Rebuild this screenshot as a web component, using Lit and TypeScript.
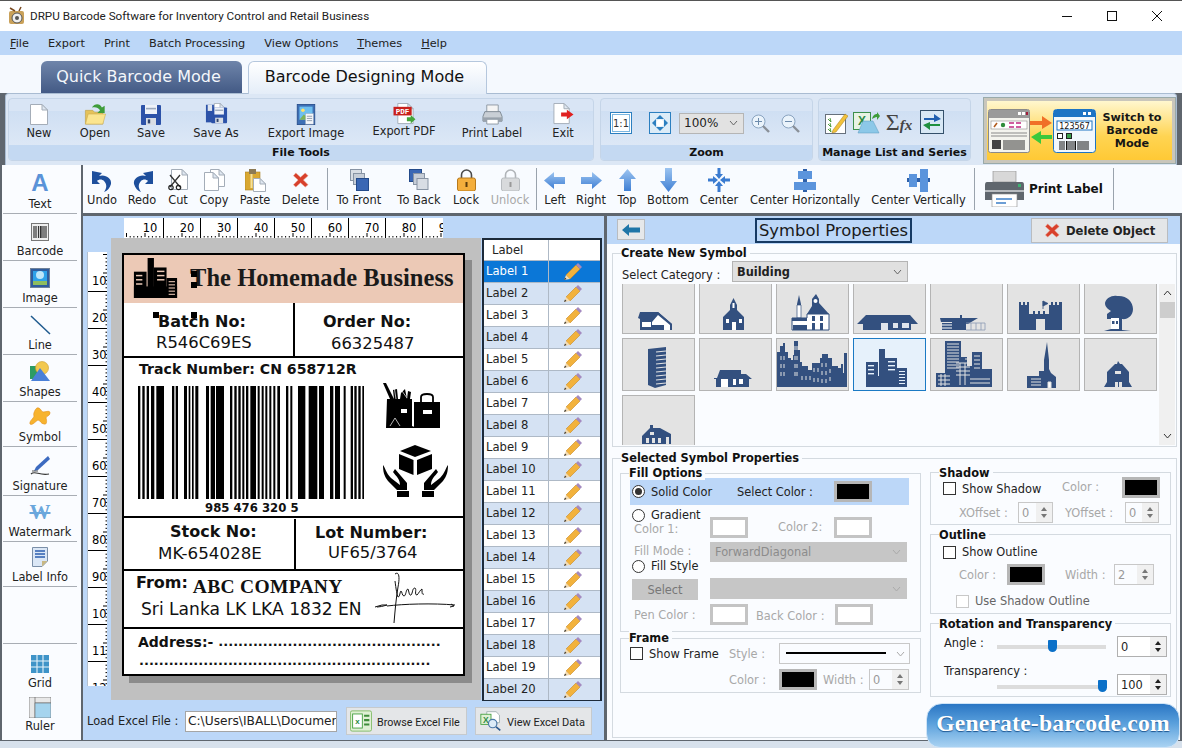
import { LitElement, html, css, svg } from "lit";
import { customElement } from "lit/decorators.js";

const I = (w: number, h: number, c: unknown) =>
  html`<svg class="i" width=${w} height=${h} viewBox="0 0 ${w} ${h}">${c}</svg>`;
const V = (w: number, h: number, vw: number, vh: number, c: unknown) =>
  html`<svg class="i" width=${w} height=${h} viewBox="0 0 ${vw} ${vh}">${c}</svg>`;

const redX = svg`<path d="M3 1 L8 5.5 L13 1 L16 4 L11 8.5 L16 13.5 L13 16 L8 11.5 L3 16 L0.5 13.5 L5.5 8.5 L0.5 4Z" fill="#d8402c" stroke="#eaa08c" stroke-width=".6"/>`;
const doc = (x = 0, y = 0, w = 17, h = 21) => svg`<path d="M${x + .5} ${y + .5}H${x + w - 6}L${x + w - .5} ${y + 6}V${y + h - .5}H${x + .5}Z" fill="#fff" stroke="#a4adb8"/><path d="M${x + w - 6} ${y + .5}V${y + 6}H${x + w - .5}Z" fill="#dfe7f1" stroke="#a4adb8"/>`;
const floppy = (x: number, y: number, s = 20) => svg`<rect x=${x} y=${y} width=${s} height=${s} rx="1" fill="#2c52a8"/><rect x=${x + s * .2} y=${y} width=${s * .6} height=${s * .45} fill="#eef2f8"/><rect x=${x + s * .25} y=${y + s * .14} width=${s * .5} height=${s * .08} fill="#9aa8bc"/><rect x=${x + s * .25} y=${y + s * .65} width=${s * .5} height=${s * .35} fill="#d8dde4"/><rect x=${x + s * .34} y=${y + s * .72} width=${s * .12} height=${s * .2} fill="#30456e"/>`;

const icons: Record<string, unknown> = {
  new: I(20, 21, doc(1, 0, 18, 21)),
  open: V(23, 22, 24, 24, svg`<path d="M1 8H9L11 10H20V23H1Z" fill="#e5c25a" stroke="#b89a3e" stroke-width=".6"/><path d="M1 23L4 12H23L20 23Z" fill="#fbe58f" stroke="#c9a94c" stroke-width=".6"/><path d="M8 5C11 0 17 0 19 5L22 3V11H14L17 8C15 5 12 4 8 5Z" fill="#3f9d3a"/>`),
  save: I(20, 20, floppy(0, 0, 20)),
  saveas: V(23, 22, 24, 25, svg`${doc(9, 0, 13, 12)}${floppy(6, 5, 18)}<rect x="0" y="2" width="9" height="20" fill="#2c52a8"/><rect x="2" y="2" width="5" height="7" fill="#dfe5ee"/>`),
  img: V(20, 21, 21, 24, svg`<rect x=".5" y=".5" width="20" height="23" fill="#3d6fb5" stroke="#294f8c"/><rect x="3" y="3" width="15" height="15" fill="#6ebff0"/><circle cx="7" cy="7" r="2" fill="#ffe26a"/><path d="M3 18L8 12L12 15L18 11V18Z" fill="#7fb358"/><rect x="10" y="11" width="9" height="12" fill="#f4f6fa" stroke="#9aa8ba" stroke-width=".5"/><path d="M11.5 14H17.5M11.5 16.5H17.5M11.5 19H17.5" stroke="#6c7d94" stroke-width=".8"/>`),
  pdf: V(23, 22, 23, 23, svg`${doc(4, 0, 17, 22)}<rect x="0" y="4" width="19" height="9" fill="#c8201c"/><text x="9.5" y="11.6" font-family="Liberation Mono" font-size="8" font-weight="700" fill="#fff" text-anchor="middle">PDF</text><path d="M14 15H18V12.5L23 17L18 21.5V19H14Z" fill="#44a53c"/>`),
  print: V(21, 21, 22, 22, svg`<path d="M5 1H17V9H5Z" fill="#f4f4f4" stroke="#8f99a4"/><path d="M3 8H19L21 13V18H1V13Z" fill="#c9cfd5" stroke="#7e8993"/><rect x="1" y="14" width="20" height="4" fill="#9aa3ad"/><path d="M5 16H17V21H5Z" fill="#fff" stroke="#8f99a4"/>`),
  exit: V(23, 22, 23, 23, svg`${doc(1, 0, 17, 22)}<path d="M9 10H15V7L22 12L15 17V14H9Z" fill="#e02020"/>`),
  undo: V(21, 23, 21, 23, svg`<path d="M0 2L10 4L7 7C13 5 20 9 19 15C18 19 15 22 12 23C15 19 15 15 12 12C10 10 7 10 5 12L8 15L0 15Z" fill="#1e4f9c"/>`),
  redo: V(21, 23, 21, 23, svg`<path d="M21 2L11 4L14 7C8 5 1 9 2 15C3 19 6 22 9 23C6 19 6 15 9 12C11 10 14 10 16 12L13 15L21 15Z" fill="#1e4f9c"/>`),
  cut: I(20, 22, svg`${doc(3, 0, 17, 21)}<path d="M2 6L12 18M12 6L2 18" stroke="#333" stroke-width="1.3"/><circle cx="3" cy="18.5" r="2.2" fill="none" stroke="#222" stroke-width="1.2"/><circle cx="10.5" cy="18.5" r="2.2" fill="none" stroke="#222" stroke-width="1.2"/>`),
  copy: I(21, 22, svg`${doc(6, 0, 15, 18)}${doc(0, 3, 15, 19)}`),
  paste: I(21, 23, svg`<rect x="0" y="3" width="15" height="18" fill="#d9a832" stroke="#a97f22" stroke-width=".6"/><rect x="4" y="0" width="7" height="5" fill="#8c7a54"/><rect x="5.5" y="5" width="2" height="14" fill="#f6e19a"/>${doc(8, 9, 13, 14)}`),
  del: V(16, 16, 17, 17, redX),
  front: I(19, 23, svg`<rect x=".5" y=".5" width="11" height="11" fill="#d8dde4" stroke="#8894a4"/><rect x="3.5" y="4.5" width="11" height="11" fill="#c6cdd7" stroke="#8894a4"/><rect x="6.5" y="9.5" width="12" height="12" fill="#3a67b4" stroke="#234a8a"/>`),
  back: I(20, 23, svg`<rect x=".5" y=".5" width="12" height="12" fill="#3a67b4" stroke="#234a8a"/><rect x="4.5" y="4.5" width="11" height="11" fill="#c6cdd7" stroke="#8894a4"/><rect x="8" y="9.5" width="11" height="11" fill="#d8dde4" stroke="#8894a4"/>`),
  lock: I(19, 22, svg`<path d="M4.5 10V6A5 5 0 0 1 14.5 6V10" fill="none" stroke="#4a4a4a" stroke-width="1.6"/><rect x=".5" y="9" width="18" height="13" rx="2" fill="#f4ae3c" stroke="#b87a1c"/><rect x="8.5" y="13" width="2" height="5" fill="#5b3b0b"/>`),
  unlock: I(19, 22, svg`<path d="M4.5 10V6A5 5 0 0 1 14.5 6V10" fill="none" stroke="#b0b4b8" stroke-width="1.6"/><rect x=".5" y="9" width="18" height="13" rx="2" fill="#d8dadc" stroke="#b8bcc0"/><rect x="8.5" y="13" width="2" height="5" fill="#999"/>`),
  left: I(22, 17, svg`<path d="M0 8.5L10 0V5H21V12H10V17Z" fill="url(#gb)"/>`),
  right: I(22, 17, svg`<path d="M22 8.5L12 0V5H1V12H12V17Z" fill="url(#gb)"/>`),
  top: I(17, 22, svg`<path d="M8.5 0L17 10H12V22H5V10H0Z" fill="url(#gb)"/>`),
  bottom: I(17, 24, svg`<path d="M8.5 24L17 13H12V0H5V13H0Z" fill="url(#gb)"/>`),
  center: I(22, 24, svg`<g fill="#3a7bd0"><path d="M11 11L7 6H9.5V0H12.5V6H15Z"/><path d="M11 13L7 18H9.5V24H12.5V18H15Z"/><path d="M10 12L5 8V10.5H0V13.5H5V16Z"/><path d="M12 12L17 8V10.5H22V13.5H17V16Z"/></g>`),
  ch: I(22, 23, svg`<rect x="9" y="0" width="4" height="23" fill="#2d5fa8"/><rect x="4" y="2" width="14" height="8" fill="#5b94dc"/><rect x="0" y="13" width="22" height="8" fill="#5b94dc"/>`),
  cv: I(23, 23, svg`<rect x="0" y="9" width="23" height="4" fill="#2d5fa8"/><rect x="2" y="5" width="8" height="13" fill="#5b94dc"/><rect x="13" y="0" width="8" height="23" fill="#5b94dc"/>`),
};

const side: Record<string, unknown> = {
  text: html`<span class="sa">A</span>`,
  barcode: I(18, 18, svg`<rect x=".5" y=".5" width="17" height="17" fill="#f0f0f0" stroke="#777"/><path d="M3 3V15M5 3V15M7.5 3V15M9.5 3V15M11 3V15M13 3V15M15 3V15" stroke="#333" stroke-width="1.2"/>`),
  image: I(20, 20, svg`<rect x=".5" y=".5" width="19" height="19" fill="#2f5c9e" stroke="#6f8199"/><rect x="3" y="3" width="14" height="14" fill="#2ea1ea"/><circle cx="10" cy="7" r="4" fill="#bfe6fa"/><rect x="3" y="13" width="14" height="4" fill="#8fbe5e"/>`),
  line: I(21, 20, svg`<path d="M1 1L20 19" stroke="#1f5a8e" stroke-width="1.5"/>`),
  shapes: I(20, 21, svg`<rect x="0" y="5" width="10" height="13" fill="#2d9c63"/><circle cx="12" cy="7" r="6.5" fill="#f2c84f" stroke="#c99a2c" stroke-width=".6"/><path d="M10 7L20 20H1Z" fill="#4a80d8"/>`),
  symbol: I(22, 20, svg`<path d="M8 1C11 0 12 4 14 5C17 5 21 3 21 6C21 9 17 9 17 11C18 14 18 18 15 17C12 17 11 13 9 13C7 14 3 19 1 17C0 14 5 11 5 9C4 7 6 2 8 1Z" fill="#f7b32e" stroke="#e08f1e" stroke-width=".6"/>`),
  signature: I(20, 20, svg`<path d="M18 0L20 3L8 14L4 15L6 11Z" fill="#3d6bc0"/><path d="M1 18C5 14 9 20 19 18" stroke="#333" stroke-width="1.2" fill="none"/><path d="M2 15L8 15" stroke="#555"/>`),
  watermark: html`<span class="wm">W</span>`,
  info: I(16, 20, svg`<path d="M.5 .5H15.5V14L10 19.5H.5Z" fill="#dbe7f6" stroke="#7b8fa8"/><path d="M3 4H13M3 7H13M3 10H13" stroke="#2d5fb0" stroke-width="1.3"/><path d="M10 19.5V14H15.5Z" fill="#c8b884"/>`),
  grid: I(18, 18, svg`<rect width="18" height="18" fill="#3f94c8"/><path d="M6 0V18M12 0V18M0 6H18M0 12H18" stroke="#e6f3fa" stroke-width="1.1"/>`),
  ruler: I(22, 21, svg`<rect x="0" y="0" width="22" height="6" fill="#e8e8e8" stroke="#666" stroke-width=".7"/><rect x="0" y="0" width="6" height="21" fill="#e8e8e8" stroke="#666" stroke-width=".7"/><rect x="6" y="6" width="16" height="15" fill="#a5d4ee" stroke="#666" stroke-width=".6"/>`),
};

const pencil = I(18, 17, svg`<path d="M2 12L12 2L16 6L6 16Z" fill="#f2b23c" stroke="#c98820" stroke-width=".6"/><path d="M12 2L14 0L18 4L16 6Z" fill="#a48ac0"/><path d="M2 12L0 17L6 16Z" fill="#f5dcb0"/><path d="M0 17L1 14.5L2.5 16Z" fill="#333"/>`);

const city = (f: string, w: string) => svg`<g fill=${f}><rect x="0" y="13" width="12" height="25"/><rect x="13" y="0" width="6" height="38"/><rect x="19" y="9" width="12" height="29"/><rect x="31" y="19" width="10" height="19"/><rect x="0" y="27" width="41" height="11"/></g><g fill=${w}><rect x="2" y="16" width="6" height="1.4"/><rect x="2" y="20" width="6" height="1.4"/><rect x="2" y="24" width="6" height="1.4"/><rect x="22" y="12" width="7" height="1.4"/><rect x="22" y="16" width="7" height="1.4"/><rect x="22" y="20" width="7" height="1.4"/><rect x="33" y="22" width="6" height="1"/><rect x="33" y="25" width="6" height="1"/><rect x="33" y="28" width="6" height="1"/><rect x="33" y="31" width="6" height="1"/><rect x="33" y="34" width="6" height="1"/></g>`;

const C = "#33507f";
const tiles = [
  svg`<path d="M18 31H36L50 43V49H18V38L16 37Z" fill=${C}/><path d="M36 31L50 43H41V39L36 33L30 39V40H20Z" fill=${C}/><path d="M36 34L48 44V49H42V44H30V41Z" fill="#fff"/><rect x="20" y="41" width="9" height="5" fill="#fff"/><path d="M33 45H35V49H33ZM38 45H41V49H38Z" fill=${C}/>`,
  svg`<path d="M34.5 17L38 24V29L45 36V49H24V36L31 29V24Z" fill=${C}/><rect x="33.5" y="22" width="2" height="5" fill="#fff"/><rect x="33" y="41" width="4" height="8" fill="#fff"/><path d="M27 38H30V42H27ZM40 38H43V42H40Z" fill="#fff"/>`,
  svg`<path d="M21 23L23 14L25 23V37H21Z" fill=${C}/><path d="M36 25V18L40 13L43 18V22L53 33H31Z" fill=${C}/><path d="M21 24H25V37H21Z" fill="#fff" stroke=${C} stroke-width=".7"/><path d="M16 37H31V33H53V49H16Z" fill="#fff" stroke=${C}/><path d="M16 37H31V40H16ZM17 44H31V49H17Z" fill=${C}/><path d="M36 35H39V40H36ZM44 35H47V40H44ZM36 42H39V49H36ZM44 42H47V49H44Z" fill=${C}/><circle cx="39.5" cy="20" r="2" fill="#fff"/>`,
  svg`<path d="M10 37L4 43H10V49H58V43H65L57 34H13Z" fill=${C}/><path d="M28 42H35V49H28ZM40 42H45V47H40ZM49 42H56V47H49Z" fill="#fff" fill-opacity=".85"/>`,
  svg`<path d="M10 37H30V34H32V37H48L38 43H36V49H22V41H11Z" fill=${C}/><path d="M12 42H22V49H12Z" fill=${C}/><path d="M12 44H22M12 47H22" stroke="#fff" stroke-width="1"/><path d="M36 42H55V49H36M41 42V49M46 42V49M51 42V49" fill="none" stroke="#8a9ab4" stroke-width=".8"/>`,
  svg`<path d="M12 21H14V24H16V21H18V24H20V21H22V33H26V30H28V33H31V30H33V33H36V30H38V33H42V24H44V21H46V24H48V21H50V24H52V21H55V49H38V38H29V49H12Z" fill=${C}/><path d="M36 20V28M36 20L41 22.5L36 25Z" fill=${C} stroke=${C} stroke-width=".8"/>`,
  svg`<path d="M33 15C42 14 49 20 49 28C49 35 43 39 38 38V49L47 50H20L27 48V38H23V33L27 30C24 28 21 26 21 22C22 17 28 14 33 15Z" fill=${C}/><path d="M27 37H35V48H27Z" fill="#fff"/><rect x="28" y="40" width="2.5" height="3" fill=${C}/><rect x="32" y="40" width="2" height="3" fill=${C}/>`,
  svg`<path d="M26 11L44 9V47L33 50L26 47Z" fill=${C}/><path d="M34 14L44 13M34 18L44 17M34 22L44 21M34 26L44 25M34 30L44 29M34 34L44 33M34 38L44 37M34 42L44 41M34 46L44 45" stroke="#e3e3e3" stroke-width="1.2"/>`,
  svg`<path d="M15 40H18L21 32H42V36H47L53 41H50V49H17V41H15Z" fill=${C}/><path d="M22 41H29V49H22ZM34 41H37V47H34ZM40 41H44V46H40Z" fill="#fff"/>`,
  svg`<path d="M1 49V14H4V8H7V5H9V14H12V20H15V22H17V17H18V3H22V12H24V24H26V28H32V32H36V25H44V20H46V16H52V20H56V28H62V30H65V26H67V35H68V15H71V49Z" fill=${C}/><path d="M5 18V22M8 18V22M5 26V30M8 26V30M5 34V38M8 34V38M19 8V12M21 8V12M19 18V22M21 18V22M19 26V30M21 26V30M19 34V38M21 34V38M38 30V34M42 30V34M46 25V29M50 25V29M54 31V35M46 33V37M50 33V37M54 39V43M46 41V45M50 41V45M38 40V44M42 40V44M30 38V42M34 38V42M26 38V42" stroke="#e3e3e3" stroke-width="1"/>`,
  V(41, 38, 41, 38, city(C, "#e6f1fb")),
  svg`<path d="M15 3H31V19H37V28H42V14H52V31H62V49H6V35H15Z" fill=${C}/><path d="M17 6H29M17 9H29M17 12H29M17 15H29M17 18H29M17 21H29M17 24H29M17 27H29M17 30H29M39 21H35M26 25H40M26 29H40M26 33H40M26 37H40M44 18H50M44 22H50M44 26H50M44 30H50M8 38H20M8 42H20M8 46H20M40 41H60M40 45H60M11 36V48M15 36V48M30 25V47M35 25V47" stroke="#e3e3e3" stroke-width="1"/>`,
  svg`<path d="M40 4L42 22V31L44 35L49 39V50H20V38H32V33H37V22Z" fill=${C}/><path d="M41 44H44V50H41ZM24 41H34M24 44H34M24 47H34" stroke="#e3e3e3" fill="#fff"/>`,
  svg`<path d="M34 23L36 26H38L45 34V44L48 49H20L23 44V34L31 26H33Z" fill=${C}/><path d="M31 33H37V36H31ZM31 44H34V49H31ZM35 44H38V49H35Z" fill="#e3e3e3"/>`,
  svg`<path d="M20 41L28 33V30H31V33H38L49 39V49H20Z" fill=${C}/><path d="M24 43H27V48H24ZM30 43H33V48H30ZM36 43H39V48H36ZM44 42H47V49H44ZM28 37H32V40H28Z" fill="#e3e3e3"/>`,
];

const bars: [number, number][] = [[84,7],[97,7],[110,7],[123,10],[139,23],[186,7],[197,7],[222,9],[236,5],[246,5],[256,9],[288,9],[302,13],[318,24],[360,7],[373,7],[385,7],[397,6],[408,7],[421,17],[443,6],[455,6],[466,6],[478,6],[490,6],[502,8],[528,7],[541,6],[564,22],[596,26],[627,15],[660,10],[675,15],[701,6],[722,7],[733,7],[745,7],[757,5]];

const rulerH = () => {
  const t = [];
  for (let i = 0; i < 86; i++) {
    const x = 2 + i * 3.7;
    t.push(svg`<rect x=${x} y=${i % 5 === 0 ? 15 : 18} width="1" height=${i % 5 === 0 ? 4 : 1.5} fill="#000"/>`);
  }
  for (let i = 1; i <= 9; i++) {
    const x = 39 + (i - 1) * 37;
    t.push(svg`<rect x=${x} y="0" width="1" height="20" fill="#000"/><text x=${x - 13} y="14" font-size="11.5" text-anchor="middle" font-family="DejaVu Sans">${i * 10}</text>`);
  }
  return I(319, 20, t);
};
const rulerV = () => {
  const t = [];
  for (let i = 0; i < 118; i++) {
    const y = 2 + i * 3.7;
    t.push(svg`<rect x=${i % 5 === 0 ? 15 : 17.5} y=${y} width=${i % 5 === 0 ? 5 : 2} height="1" fill="#000"/>`);
  }
  for (let i = 1; i <= 12; i++) {
    const y = 39 + (i - 1) * 37;
    t.push(svg`<rect x="0" y=${y} width="20" height="1" fill="#000"/><text x="4" y=${y - 6} font-size="11.5" font-family="DejaVu Sans">${i * 10}</text>`);
  }
  return I(20, 434, t);
};

@customElement("app-root")
export class AppRoot extends LitElement {
  static styles = css`
    :host { display: block; width: 1182px; height: 748px; font-family: "DejaVu Sans", sans-serif; font-size: 11.4px; color: #222; overflow: hidden; }
    * { box-sizing: border-box; }
    .i { display: block; flex: none; }
    .app { position: relative; width: 1182px; height: 748px; background: #5f666e; display: flex; flex-direction: column; overflow: hidden; }
    .title { height: 31px; background: #fff; border-top: 1px solid #555; display: flex; align-items: center; font: 11.7px Roboto, sans-serif; color: #222; padding-left: 7px; gap: 3px; }
    .wc { margin-left: auto; margin-right: 3px; display: flex; gap: 0; }
    .wc span { width: 45px; height: 30px; display: flex; align-items: center; justify-content: center; }
    .menu { height: 24px; background: #bcd7f8; display: flex; align-items: center; padding-left: 10px; gap: 19px; font-size: 11.3px; }
    .menu u { text-decoration: underline; }
    .tabs { height: 38px; background: #f5f9fe; display: flex; align-items: flex-end; padding-left: 41px; gap: 6px; }
    .tab { height: 32px; display: flex; align-items: center; justify-content: center; font-size: 16px; border-radius: 6px 6px 0 0; padding: 0 6px 2px 0; }
    .tab.q { width: 201px; color: #f4f7fb; background: linear-gradient(#6f85aa, #435a85); }
    .tab.d { width: 239px; height: 33px; margin-bottom: -1px; color: #111; background: linear-gradient(#fff, #e4edf8); border: 1px solid #b5c7dd; border-bottom: none; position: relative; z-index: 1; padding-bottom: 3px; }
    .ribbon { height: 72px; margin-left: 5px; width: 1172px; background: #dce7f5; border: 1px solid #a9bcd2; border-bottom: none; border-radius: 4px 4px 0 0; display: flex; padding: 4px 0 0 2px; }
    .grp { height: 63px; display: flex; flex-direction: column; border: 1px solid #c5d5e8; border-radius: 4px; background: linear-gradient(#d9e5f5 0, #d9e5f5 12px, #cfdff3 12px, #dde8f6 48px); overflow: hidden; }
    .grp.f { width: 586px; } .grp.z { width: 213px; margin-left: 6px; } .grp.m { width: 153px; margin-left: 5px; }
    .gb { height: 47px; display: flex; }
    .gf { height: 15px; background: #c4d9f2; text-align: center; font-weight: 700; font-size: 11px; line-height: 15px; color: #111; white-space: nowrap; }
    .rb { display: flex; flex-direction: column; align-items: center; padding-top: 2px; flex: none; white-space: nowrap; }
    .ib { height: 24px; display: flex; align-items: flex-end; }
    .rb span { line-height: 14px; margin-top: 1px; }
    .rb.up span { margin-top: -1px; }
    .f0 { margin-left: 2px; }
    .w56 { width: 56px; } .w74 { width: 74px; } .w106 { width: 106px; } .w90 { width: 90px; } .w86 { width: 86px; }
    .zb { align-items: center; padding: 2px 0 0 9px; }
    .combo100 { width: 65px; height: 21px; margin: 0 7px 0 8px; background: #e2e2e2; border: 1px solid #b5b5b5; display: flex; align-items: center; justify-content: space-between; padding: 0 5px 0 4px; font-size: 12px; }
    .g17 { margin-left: 17px; } .g11 { margin-left: 11px; }
    .mb { align-items: center; padding-left: 6px; gap: 5px; }
    .mb .l7 { margin-left: 2px; }
    .sig { font: 400 24px "Liberation Serif", serif; color: #444; width: 28px; white-space: nowrap; line-height: 22px; text-align: center; }
    .sig i { font: italic 700 15px "Liberation Serif", serif; }
    .sw2 { width: 193px; height: 67px; margin-left: 12px; margin-top: -1px; background: #c9c6bb; border: 1px solid #9aa; padding: 3px; }
    .sw2i { height: 100%; display: flex; align-items: center; padding-left: 1px; background: linear-gradient(#fff7cf, #ffd452 60%, #ffc935); }
    .swt { flex: 1; text-align: center; font-weight: 700; font-size: 11.2px; line-height: 13px; color: #161616; padding: 0 4px 0 0; }
    .main { flex: 1; display: flex; padding: 0 0 0 2px; gap: 2px; height: 575px; }
    .side { width: 79px; height: 575px; background: #fafcff; display: flex; flex-direction: column; flex: none; padding: 0 4px 0 1px; }
    .si { display: flex; flex-direction: column; align-items: center; justify-content: flex-end; border-bottom: 1px solid #a8adb4; padding-bottom: 2px; flex: none; white-space: nowrap; }
    .si span.t { line-height: 14px; margin-top: 3px; }
    .h49 { height: 49px; } .h47 { height: 47px; } .h46 { height: 46px; } .h45 { height: 45px; } .h49b { height: 49px; }
    .spacer { height: 57px; border-bottom: 1px solid #a8adb4; flex: none; }
    .sb { display: flex; flex-direction: column; align-items: center; flex: none; white-space: nowrap; margin-top: 11px; }
    .sb span.t { line-height: 14px; margin-top: 3px; }
    .sb.r { margin-top: 7px; }
    .sb.r span.t { margin-top: 1px; }
    .sa { font: 700 24px "Liberation Sans", sans-serif; color: #5a93d8; line-height: 22px; }
    .wm { font: 700 21px "Liberation Serif", serif; line-height: 19px; color: #6aa7dc; text-decoration: line-through; }
    .content { flex: 1; display: flex; flex-direction: column; gap: 3px; min-width: 0; }
    .tb { height: 48px; flex: none; background: #f8fbff; display: flex; }
    .ti { display: flex; flex-direction: column; align-items: center; justify-content: flex-end; padding-bottom: 6px; flex: none; white-space: nowrap; }
    .ti span { line-height: 14px; margin-top: 1px; }
    .ti .ib { height: 24px; align-items: center; }
    .ti.off { color: #a8a8a8; }
    .tsp { width: 1px; height: 42px; margin-top: 3px; background: #9aa3ad; flex: none; }
    .t0 { width: 1px; } .t36 { width: 36px; } .t44 { width: 44px; } .t28 { width: 28px; } .t38 { width: 38px; } .t53 { width: 53px; } .t62 { width: 62px; } .t58 { width: 58px; } .t52 { width: 52px; } .t46 { width: 46px; } .t56 { width: 56px; } .t116 { width: 116px; } .t111 { width: 111px; }
    .tp { width: 138px; display: flex; align-items: center; padding-left: 10px; gap: 5px; font-weight: 700; font-size: 12px; color: #111; flex: none; }
    .work { flex: 1; display: flex; gap: 3px; min-height: 0; }
    .canvas { width: 521px; background: #bcd7f8; display: flex; flex-direction: column; flex: none; }
    .rt { height: 22px; padding: 2px 0 0 41px; flex: none; }
    .rh { background: #fff; width: 319px; height: 20px; }
    .mid { height: 463px; display: flex; flex: none; }
    .rv { width: 20px; height: 434px; margin: 14px 4px 0 4px; background: #fff; flex: none; overflow: hidden; border-left: 1px solid #b4c0cf; }
    .gray { width: 370px; height: 462px; background: #c0c0c0; padding: 15px 0 0 11px; flex: none; }
    .card { width: 343px; height: 423px; border: 2px solid #000; background: #fff; box-shadow: 7px 7px 0 #8b8b8b; color: #111; position: relative; }
    .c1 { height: 48px; background: #ecc9b6; display: flex; align-items: center; padding: 0 0 2px 9px; }
    .hname { font: 700 24.5px "Liberation Serif", serif; margin-left: 12px; white-space: nowrap; letter-spacing: .04px; color: #1a1a1a; }
    .hd { position: absolute; width: 6px; height: 6px; background: #000; }
    .hd.a { left: 67px; top: 16px; } .hd.b { left: 67px; top: 27px; } .hd.c { left: 29px; top: 57px; } .hd.d { left: 67px; top: 57px; }
    .c2 { height: 55px; display: grid; grid-template-columns: 169px 1fr; border-bottom: 2px solid #000; }
    .c4 { height: 53px; display: grid; grid-template-columns: 170px 1fr; border-bottom: 2px solid #000; }
    .cell { padding-top: 9px; white-space: nowrap; }
    .c4 .cell { padding-top: 4px; }
    .cell.r { border-left: 2.5px solid #000; }
    .cell.l { margin-top: 1px; }
    .bh { font-weight: 700; font-size: 16px; line-height: 20px; }
    .rg { font-size: 16.4px; line-height: 20px; }
    .c2 .rg { margin-top: 1px; }
    .c2 .r .rg { margin-top: 2px; }
    .c4 .rg { margin-top: 1px; font-size: 16.7px; }
    .c4 .r .rg { margin-top: 0; font-size: 16.4px; }
    .p34 { padding-left: 34px; } .p32 { padding-left: 32px; } .p30 { padding-left: 28px; } .p38 { padding-left: 36px; }
    .p46 { padding-left: 46px; } .p34b { padding-left: 34px; }
    .p20 { padding-left: 19px; } .p33 { padding-left: 32px; }
    .c3 { height: 160px; display: flex; border-bottom: 2px solid #000; }
    .c3a { width: 259px; flex: none; padding: 3px 0 0 14px; white-space: nowrap; }
    .trk { font-weight: 700; font-size: 14.1px; line-height: 16px; padding-left: 1px; }
    .bc { margin-top: 9px; }
    .bn { font-weight: 700; font-size: 11.7px; line-height: 14px; margin: 2px 0 0 67px; }
    .c3b { padding: 25px 0 0 0; display: flex; flex-direction: column; gap: 17px; }
    .c5 { height: 58px; display: flex; border-bottom: 2px solid #000; }
    .c5a { width: 249px; flex: none; padding: 2px 0 0 12px; white-space: nowrap; }
    .from { display: flex; align-items: flex-end; gap: 5px; height: 22px; }
    .from b { font-size: 16px; line-height: 20px; margin-bottom: 2px; }
    .from i { font: 700 19.5px "Liberation Serif", serif; line-height: 20px; letter-spacing: .3px; margin-bottom: -2px; }
    .sri { font-size: 17.1px; line-height: 20px; margin: 4px 0 0 5px; }
    .c6 { height: 45px; padding: 4px 0 0 14px; white-space: nowrap; overflow: hidden; }
    .ad { display: flex; height: 18px; align-items: center; font-weight: 700; font-size: 14px; }
    .dots { display: block; font-weight: 700; font-size: 13px; letter-spacing: 0; line-height: 18px; }
    .d1 { margin-left: 5px; } .d2 { margin-left: 1px; margin-top: 1px; }
    .list { width: 120px; height: 463px; margin-left: 1px; border: 2px solid #1c2a3a; background: #fff; flex: none; display: flex; flex-direction: column; }
    .lr { display: grid; grid-template-columns: 65px 1fr; height: 22px; flex: none; border-top: 1px solid #aeb9c6; }
    .lr > div { display: flex; align-items: center; padding-bottom: 1px; }
    .lr > div:first-child { padding-left: 2px; border-right: 1px solid #aeb9c6; font-size: 11.6px; }
    .lr > div:last-child { justify-content: center; padding-right: 3px; }
    .lr.hd0 { height: 20px; border-top: none; }
    .lr.hd0 > div:first-child { padding-left: 8px; }
    .lr.alt { background: #d5e2f3; }
    .lr.sel { background: #0b77d7; color: #fff; }
    .bot { flex: 1; display: flex; align-items: center; padding: 1px 0 0 4px; white-space: nowrap; }
    .xl { width: 98px; font-size: 11.4px; }
    .inp { width: 152px; height: 21px; background: #fff; border: 1px solid #a5a5a5; padding-left: 2px; line-height: 19px; overflow: hidden; font-size: 12.2px; }
    .xb { height: 28px; margin-left: 9px; background: #e4e6e8; border: 1px solid #c6cacd; display: flex; align-items: center; font: 11px Roboto, sans-serif; gap: 5px; }
    .xb span { padding-top: 2px; }
    .xb.a { width: 121px; padding-left: 3px; font-size: 10.7px; } .xb.b { width: 117px; margin-left: 8px; padding-left: 4px; }
    .panel { flex: 1; max-width: 573px; background: #fafcff; display: flex; flex-direction: column; min-width: 0; }
    .ph { height: 28px; flex: none; background: #bcd7f8; display: flex; align-items: flex-start; }
    .bk { width: 28px; height: 21px; margin: 3px 0 0 10px; background: #e6e8ea; border: 1px solid #b9bcc0; display: flex; align-items: center; justify-content: center; }
    .pt { width: 157px; height: 25px; margin: 2px 0 0 110px; border: 2px solid #173a63; font-size: 16.4px; display: flex; align-items: center; justify-content: center; white-space: nowrap; color: #1a1a1a; }
    .do { width: 137px; height: 25px; margin: 2px 0 0 119px; background: #e4e6e8; border: 1px solid #b9bcc0; display: flex; align-items: center; padding-left: 13px; gap: 6px; font-weight: 700; font-size: 11.6px; }
    .gbx { position: relative; border: 1px solid #d4dae0; flex: none; }
    .lg { position: absolute; top: -8px; height: 14px; line-height: 14px; background: #fafcff; padding: 0 3px 0 0; font-weight: 700; font-size: 11.4px; white-space: nowrap; color: #111; left: 8px; }
    .rc .lg { top: -7px; }
    .cr { margin: 9px 5px 0 5px; height: 194px; width: 565px; }
    .sc { display: grid; grid-template-columns: 110px 176px; padding: 7px 0 0 9px; align-items: center; height: 28px; }
    .sc > span { padding-top: 6px; }
    .cb { height: 21px; background: #e0e0e0; border: 1px solid #b4b4b4; display: flex; align-items: center; justify-content: space-between; padding: 0 5px 0 4px; white-space: nowrap; }
    .cb.bold { font-weight: 700; }
    .cb.off { background: #c6c6c6; border-color: #c6c6c6; color: #8c8c8c; }
    .gal { display: flex; padding: 2px 0 0 9px; }
    .galv { width: 535px; height: 161px; overflow: hidden; flex: none; }
    .gg { margin-top: -3px; display: grid; grid-template-columns: repeat(7, 73px); grid-auto-rows: 53px; gap: 4px; }
    .tile { background: #e3e3e3; border: 1px solid #b4b4b4; position: relative; }
    .tile svg { display: block; position: absolute; left: -1px; top: -1px; }
    .tile.s { background: #e6f1fb; border-color: #1b7ac4; }
    .tile.s svg { left: 12px; top: 10px; }
    .scr { width: 16px; height: 161px; margin-left: 2px; background: #f0f0f0; flex: none; display: flex; flex-direction: column; align-items: center; }
    .thumb { width: 15px; height: 16px; background: #cdcdcd; margin: 0 0 auto 0; }
    .ar { height: 18px; display: flex; align-items: center; justify-content: center; flex: none; }
    .sel-g { margin: 11px 5px 0 5px; height: 280px; width: 565px; display: flex; padding: 14px 0 0 7px; border-color: #d4dae0; }
    .lc { width: 301px; flex: none; }
    .rc { width: 241px; margin: -1px 0 0 9px; flex: none; }
    .fill { height: 159px; padding: 4px 0 0 9px; }
    .solid { width: 279px; height: 27px; background: #bcd7f8; display: grid; grid-template-columns: 19px 86px 97px 38px; align-items: center; padding-left: 2px; }
    .radio { width: 13px; height: 13px; border: 1px solid #333; border-radius: 50%; background: #fff; display: block; position: relative; }
    .radio.on::after { content: ""; position: absolute; left: 2px; top: 2px; width: 7px; height: 7px; border-radius: 50%; background: #333; }
    .chk { width: 13px; height: 13px; border: 1px solid #333; background: #fff; display: block; }
    .chk.off { border-color: #c8c8c8; }
    .sw { width: 38px; height: 21px; border: 3px solid #c4c4c4; background: #fff; display: block; flex: none; }
    .sw.k { background: #000; border-color: #b6b6b6; }
    .fcols { display: flex; }
    .fl { width: 80px; flex: none; }
    .fr { width: 197px; flex: none; }
    .ln { height: 15px; line-height: 15px; white-space: nowrap; }
    .ln.d { color: #a8a8a8; padding-left: 4px; }
    .rl { display: flex; align-items: center; gap: 6px; height: 16px; padding-left: 2px; white-space: nowrap; }
    .m2 { margin-top: 2px; } .mn2 { margin-top: -1px; } .m8 { margin-top: 7px; } .mn1 { margin-top: -1px; }
    .btnsel { width: 66px; height: 21px; margin: 5px 0 0 2px; background: #c6c6c6; color: #777; display: flex; align-items: center; justify-content: center; }
    .m7 { margin-top: 8px; }
    .r1 { display: flex; align-items: center; margin-top: 12px; height: 20px; color: #a8a8a8; white-space: nowrap; }
    .r1 .lb2 { width: 86px; padding-left: 30px; }
    .r4 { display: flex; align-items: center; margin-top: 5px; height: 20px; color: #a8a8a8; white-space: nowrap; }
    .r4 .lb2 { width: 87px; padding: 3px 0 0 8px; }
    .m5 { margin-top: 5px; height: 20px; } .m16 { margin-top: 16px; }
    .frame { height: 55px; margin-top: 6px; padding: 4px 0 0 9px; }
    .fr1 { display: grid; grid-template-columns: 19px 80px 50px 131px; align-items: center; height: 21px; white-space: nowrap; }
    .fr2 { display: grid; grid-template-columns: 99px 50px 44px 46px 40px; align-items: center; height: 21px; margin-top: 5px; white-space: nowrap; color: #a8a8a8; }
    .dl { color: #a8a8a8; }
    .cbf { height: 21px; background: #fafcff; border: 1px solid #c8c8c8; display: flex; align-items: center; justify-content: space-between; padding: 0 4px 0 6px; }
    .spin { height: 21px; border: 1px solid #c8c8c8; background: #fafcff; display: flex; align-items: center; justify-content: space-between; padding-left: 3px; color: #999; flex: none; overflow: hidden; }
    .spin.on { border-color: #b0b0b0; background: #fff; color: #222; }
    .spa { width: 16px; height: 100%; display: flex; flex-direction: column; align-items: center; justify-content: space-evenly; background: #f0f0f0; flex: none; }
    .shadow { height: 53px; padding: 4px 0 0 12px; }
    .sh1 { display: grid; grid-template-columns: 19px 100px 60px 38px; align-items: center; height: 21px; white-space: nowrap; }
    .sh1 > .chk, .sh1 > .tx { margin-top: 2px; }
    .sh1 > .dl { margin-bottom: 2px; }
    .sh2 { display: grid; grid-template-columns: 59px 35px 12px 60px 34px; align-items: center; height: 21px; margin: 4px 0 0 16px; white-space: nowrap; color: #a8a8a8; }
    .outline { height: 80px; margin-top: 9px; padding: 10px 0 0 12px; }
    .ol1 { display: grid; grid-template-columns: 19px 1fr; align-items: center; height: 13px; white-space: nowrap; }
    .ol2 { display: grid; grid-template-columns: 48px 38px 20px 49px 40px; align-items: center; height: 21px; margin: 6px 0 0 16px; white-space: nowrap; color: #a8a8a8; }
    .ol3 { display: grid; grid-template-columns: 19px 1fr; align-items: center; height: 13px; margin: 9px 0 0 13px; white-space: nowrap; color: #666; }
    .rot { height: 74px; margin-top: 9px; padding: 12px 0 0 13px; }
    .ro1 { display: grid; grid-template-columns: 53px 109px 11px 50px; height: 21px; align-items: center; white-space: nowrap; }
    .ro1 .up { margin-top: -8px; }
    .ro2 { display: grid; grid-template-columns: 53px 109px 11px 50px; grid-template-rows: 14px 17px; margin-top: 7px; white-space: nowrap; }
    .tl { grid-column: 1 / 3; grid-row: 1; line-height: 14px; }
    .sl { position: relative; height: 4px; background: #dcdcdc; display: block; }
    .sl i { position: absolute; top: -5px; width: 9px; height: 12px; background: #0b70c8; border-radius: 1px 1px 5px 5px; display: block; }
    .slw { grid-column: 2; grid-row: 2; align-self: center; }
    .spw { grid-column: 4; grid-row: 1 / 3; align-self: end; }
    .badge { position: absolute; left: 926px; top: 703px; width: 254px; height: 45px; padding-bottom: 4px; border-radius: 16px 16px 14px 14px; background: linear-gradient(#2a76c4, #5aa0dc 45%, #a9d2f2); border: 1px solid #cfe4f7; color: #fff; font: 700 23.6px "Liberation Serif", serif; display: flex; align-items: center; justify-content: center; white-space: nowrap; letter-spacing: .2px; text-shadow: 0 1px 1px #1d5590; }
    .strip { height: 8px; background: #d7e1ec; flex: none; border-top: 1px solid #5f666e; }
    .defs { position: absolute; width: 0; height: 0; }
  `;

  private rb(icon: string, label: string, w: string, extra = "") {
    return html`<div class="rb ${w} ${extra}"><div class="ib">${icons[icon]}</div><span>${label}</span></div>`;
  }
  private ti(icon: string, label: string, w: string, off = false) {
    return html`<div class="ti ${w} ${off ? "off" : ""}"><div class="ib">${icons[icon]}</div><span>${label}</span></div>`;
  }
  private si(icon: string, label: string, h: string) {
    return html`<div class="si ${h}">${side[icon]}<span class="t">${label}</span></div>`;
  }
  private spin(v: string, w: string, on = false) {
    const up = svg`<path d="M0 4L3 0L6 4Z" fill=${on ? "#222" : "#777"}/>`;
    const dn = svg`<path d="M0 0L3 4L6 0Z" fill=${on ? "#222" : "#777"}/>`;
    return html`<span class="spin ${w} ${on ? "on" : ""}">${v}<span class="spa">${I(6, 4, up)}${I(6, 4, dn)}</span></span>`;
  }
  private chev(c = "#666") {
    return I(9, 6, svg`<path d="M1 1L4.5 5L8 1" fill="none" stroke=${c} stroke-width="1"/>`);
  }

  render() {
    const labels = Array.from({ length: 20 }, (_, i) => i + 1);
    return html`<div class="app">
      <svg class="defs"><defs><linearGradient id="gb" x1="0" y1="0" x2="0" y2="1"><stop offset="0" stop-color="#9cc4f0"/><stop offset="1" stop-color="#3f7fd4"/></linearGradient></defs></svg>
      <div class="title">
        ${I(20, 20, svg`<rect x="2" y="5" width="15" height="13" rx="2" fill="#c9a15a"/><circle cx="10" cy="12" r="5" fill="#f0f0f0" stroke="#555"/><circle cx="10" cy="12" r="2" fill="#555"/><path d="M3 2L8 5M14 1L12 5" stroke="#7a4a20" stroke-width="1.5"/>`)}
        <span>DRPU Barcode Software for Inventory Control and Retail Business</span>
        <div class="wc">
          <span>${I(12, 12, svg`<path d="M1 6.5H11" stroke="#111"/>`)}</span>
          <span>${I(12, 12, svg`<rect x="1.5" y="1.5" width="9" height="9" fill="none" stroke="#111"/>`)}</span>
          <span>${I(12, 12, svg`<path d="M1 1L11 11M11 1L1 11" stroke="#111"/>`)}</span>
        </div>
      </div>
      <div class="menu">
        <span><u>F</u>ile</span><span>Export</span><span>Print</span><span>Batch Processing</span><span>View Options</span><span><u>T</u>hemes</span><span><u>H</u>elp</span>
      </div>
      <div class="tabs"><div class="tab q">Quick Barcode Mode</div><div class="tab d">Barcode Designing Mode</div></div>
      <div class="ribbon">
        <div class="grp f">
          <div class="gb f0">
            ${this.rb("new", "New", "w56")}${this.rb("open", "Open", "w56")}${this.rb("save", "Save", "w56")}${this.rb("saveas", "Save As", "w74")}${this.rb("img", "Export Image", "w106")}${this.rb("pdf", "Export PDF", "w90", "up")}${this.rb("print", "Print Label", "w86")}${this.rb("exit", "Exit", "w56")}
          </div>
          <div class="gf">File Tools</div>
        </div>
        <div class="grp z">
          <div class="gb zb">
            ${I(22, 22, svg`<rect x=".5" y=".5" width="21" height="21" fill="#fff" stroke="#2b7fc0"/><rect x="2.5" y="2.5" width="17" height="17" fill="none" stroke="#7bb6e0"/><text x="11" y="15" font-size="10" text-anchor="middle" font-family="DejaVu Sans" fill="#333">1:1</text>`)}
            <span class="g17">${I(22, 22, svg`<rect x=".5" y=".5" width="21" height="21" fill="#dcecf8" stroke="#2b7fc0"/><path d="M11 3L15 7H7ZM11 19L7 15H15ZM3 11L7 7V15ZM19 11L15 15V7Z" fill="#2b7fc0"/><circle cx="11" cy="11" r="3.5" fill="#fff"/>`)}</span>
            <div class="combo100"><span>100%</span>${this.chev()}</div>
            ${I(19, 19, svg`<circle cx="7.5" cy="7.5" r="6.5" fill="#eaf3fb" stroke="#8aa4c0"/><path d="M4 7.5H11M7.5 4V11" stroke="#6d8bac"/><path d="M12 12L18 18" stroke="#8a9098" stroke-width="2.4"/>`)}
            <span class="g11">${I(19, 19, svg`<circle cx="7.5" cy="7.5" r="6.5" fill="#eaf3fb" stroke="#8aa4c0"/><path d="M4 7.5H11" stroke="#6d8bac"/><path d="M12 12L18 18" stroke="#8a9098" stroke-width="2.4"/>`)}</span>
          </div>
          <div class="gf">Zoom</div>
        </div>
        <div class="grp m">
          <div class="gb mb">
            ${I(23, 23, svg`<rect x=".5" y="3.5" width="20" height="19" fill="#fff" stroke="#66707c"/><path d="M3 8L6 11L5 7M3 13L6 16L5 12M3 18L6 21L5 17" stroke="#4d9c3c" fill="none"/><path d="M8 19L20 3L23 5L11 21L7 22Z" fill="#f2c23c" stroke="#a47c1c" stroke-width=".5"/>`)}
            ${I(27, 23, svg`<rect x=".5" y="1.5" width="17" height="17" fill="#e8f3e4" stroke="#3c8f4c"/><text x="9" y="14" font-size="12" font-weight="700" fill="#2c8a44" text-anchor="middle" font-family="Liberation Sans">X</text><path d="M5 22L10 10H20L26 22Z" fill="#8cc8e8" stroke="#5a98bc" stroke-width=".5"/><path d="M19 8C20 4 22 3 24 3V1L27 5L24 9V6C22 6 21 7 19 8Z" fill="#3d9c3a"/>`)}
            <div class="sig">Σ<i>fx</i></div>
            <span class="l7">${I(24, 24, svg`<rect x=".5" y=".5" width="23" height="23" fill="#d8e8f5" stroke="#34506a"/><path d="M4 8H14V4L21 9L14 12V10H4Z" fill="#2060b0"/><path d="M20 16H10V20L3 15L10 12V14H20Z" fill="#1f9040"/>`)}</span>
          </div>
          <div class="gf">Manage List and Series</div>
        </div>
        <div class="sw2"><div class="sw2i">
          ${I(42, 44, svg`<rect x=".5" y=".5" width="41" height="43" rx="2" fill="#f4f4ee" stroke="#8a8a8a"/><rect x="1" y="1" width="40" height="8" fill="#9a9a9a"/><rect x="30" y="3" width="3" height="3" fill="#fff"/><rect x="34" y="3" width="3" height="3" fill="#fff"/><rect x="38" y="3" width="2" height="3" fill="#a01e3a"/><rect x="3" y="12" width="36" height="8" fill="#fff" stroke="#777" stroke-width=".5"/><path d="M6 18L9 14" stroke="#b05a1c" stroke-width="1.6"/><circle cx="15" cy="16" r="2.2" fill="#2e8c3a"/><path d="M21 14H26M21 18H26M28 14H33M28 18H33" stroke="#c02a80" stroke-width="1.6"/><path d="M3 24H39M3 27H39" stroke="#888"/><rect x="4" y="31" width="9" height="9" fill="#444"/><path d="M16 31V41M18 31V41M20 31V41M22 31V41M24 31V41M26 31V41M28 31V41M30 31V41M32 31V41M34 31V41M36 31V41" stroke="#333"/>`)}
          <span>${I(23, 32, svg`<path d="M0 6H12V1L22 8L12 14V10H0Z" fill="#f07028"/><path d="M22 24H11V29L1 22L11 16V20H22Z" fill="#3cc83c"/>`)}</span>
          ${I(43, 44, svg`<rect x=".5" y=".5" width="42" height="43" rx="3" fill="#f2f8fd" stroke="#1d74c4"/><rect x="1" y="1" width="41" height="7" fill="#1d74c4"/><rect x="30" y="3" width="3" height="3" fill="#fff"/><rect x="35" y="3" width="3" height="3" fill="#fff"/><rect x="4" y="12" width="35" height="9" fill="#fff" stroke="#1d74c4"/><text x="21.5" y="19.5" font-size="8" text-anchor="middle" font-family="DejaVu Sans" fill="#111">123567</text><rect x="4.5" y="24.5" width="5" height="5" fill="#fff" stroke="#222"/><rect x="13.5" y="24.5" width="5" height="5" fill="#3aa04a" stroke="#222"/><path d="M7 32V41M9 32V41M11 32V41M13.5 32V41M15 32V41M17 32V41M19 32V41M21 32V41M22.5 32V41M25 32V41M27 32V41M29 32V41M31 32V41M33 32V41M35 32V41" stroke="#111" stroke-width="1"/>`)}
          <div class="swt">Switch to<br>Barcode<br>Mode</div>
        </div></div>
      </div>
      <div class="main">
        <div class="side">
          ${this.si("text", "Text", "h49")}
          ${this.si("barcode", "Barcode", "h47")}
          ${this.si("image", "Image", "h47")}
          ${this.si("line", "Line", "h47")}
          ${this.si("shapes", "Shapes", "h47")}
          ${this.si("symbol", "Symbol", "h45")}
          ${this.si("signature", "Signature", "h49b")}
          ${this.si("watermark", "Watermark", "h46")}
          ${this.si("info", "Label Info", "h45")}
          <div class="spacer"></div>
          <div class="sb">${side.grid}<span class="t">Grid</span></div>
          <div class="sb r">${side.ruler}<span class="t">Ruler</span></div>
        </div>
        <div class="content">
          <div class="tb">
            <div class="t0"></div>
            ${this.ti("undo", "Undo", "t36")}${this.ti("redo", "Redo", "t44")}${this.ti("cut", "Cut", "t28")}${this.ti("copy", "Copy", "t44")}${this.ti("paste", "Paste", "t38")}${this.ti("del", "Delete", "t53")}
            <div class="tsp"></div>
            ${this.ti("front", "To Front", "t62")}${this.ti("back", "To Back", "t58")}${this.ti("lock", "Lock", "t36")}${this.ti("unlock", "Unlock", "t52", true)}
            <div class="tsp"></div>
            ${this.ti("left", "Left", "t36")}${this.ti("right", "Right", "t36")}${this.ti("top", "Top", "t36")}${this.ti("bottom", "Bottom", "t46")}${this.ti("center", "Center", "t56")}${this.ti("ch", "Center Horizontally", "t116")}${this.ti("cv", "Center Vertically", "t111")}
            <div class="tsp"></div>
            <div class="tp">${I(39, 36, svg`<rect x="8" y="0" width="23" height="11" fill="#d8d8d8" stroke="#888" stroke-width=".6"/><path d="M2 11H37Q39 11 39 14V29H0V14Q0 11 2 11Z" fill="#5f666d"/><rect x="0" y="19" width="39" height="2" fill="#b8bcc0"/><rect x="33" y="13" width="3" height="3" fill="#3db070"/><rect x="7" y="23" width="25" height="13" fill="#fff" stroke="#888" stroke-width=".6"/><path d="M11 28H27M11 32H21" stroke="#3d7fc8" stroke-width="1.6"/>`)}<span>Print Label</span></div>
            <div class="tsp"></div>
          </div>
          <div class="work">
            <div class="canvas">
              <div class="rt"><div class="rh">${rulerH()}</div></div>
              <div class="mid">
                <div class="rv">${rulerV()}</div>
                <div class="gray">
                  <div class="card">
                    <div class="c1">${V(45, 40, 41, 38, city("#000", "#ecc9b6"))}<span class="hname">The Homemade Business</span></div>
                    <div class="c2">
                      <div class="cell"><div class="bh p34">Batch No:</div><div class="rg p32">R546C69ES</div></div>
                      <div class="cell r"><div class="bh p30">Order No:</div><div class="rg p38">66325487</div></div>
                    </div>
                    <div class="c3">
                      <div class="c3a">
                        <div class="trk">Track Number: CN 658712R</div>
                        <div class="bc">${I(226, 113, bars.map(([x, w]) => svg`<rect x=${(x - 84) / 3} y="0" width=${w / 3} height="113" fill="#000"/>`))}</div>
                        <div class="bn">985 476 320 5</div>
                      </div>
                      <div class="c3b">
                        ${I(57, 45, svg`<path d="M4 16H29V43L34 45H3Z" fill="#000"/><path d="M0 0L3 0L11 16H7ZM10 7L14 6L15 16H11ZM18 10L22 6L24 16H17ZM25 8L28 9L27 16H24Z" fill="#000"/><path d="M11 3L13 16M19 8L24 15" stroke="#fff" stroke-width=".7"/><rect x="18" y="26" width="6" height="4" fill="#fff"/><path d="M7 43L12 35L17 43" stroke="#fff" fill="none" stroke-width=".7"/><path d="M38 21V14Q38 11 44 11Q50 11 50 14V21" fill="none" stroke="#000" stroke-width="1.8"/><rect x="31" y="19" width="26" height="26" fill="#000"/><rect x="40" y="27" width="9" height="4" fill="#fff"/>`)}
                        ${I(65, 52, svg`<path d="M32 0L48 6L32 12L17 6Z" fill="#000"/><path d="M16 9L30.5 15V30L16 24Z" fill="#000"/><path d="M49 9L34 15V30L49 24Z" fill="#000"/><path d="M0 20C2 22 3 28 8 33L17 40C17 34 13 31 10 27L12 24L24 38V45H14L5 36C1 31 0 26 0 20Z" fill="#000"/><rect x="14" y="46" width="12" height="6" fill="#000"/><path d="M65 20C63 22 62 28 57 33L48 40C48 34 52 31 55 27L53 24L41 38V45H51L60 36C64 31 65 26 65 20Z" fill="#000"/><rect x="39" y="46" width="12" height="6" fill="#000"/>`)}
                      </div>
                    </div>
                    <div class="c4">
                      <div class="cell"><div class="bh p46">Stock No:</div><div class="rg p34b">MK-654028E</div></div>
                      <div class="cell r l"><div class="bh p20">Lot Number:</div><div class="rg p33">UF65/3764</div></div>
                    </div>
                    <div class="c5">
                      <div class="c5a">
                        <div class="from"><b>From:</b><i>ABC COMPANY</i></div>
                        <div class="sri">Sri Lanka LK LKA 1832 EN</div>
                      </div>
                      ${I(82, 52, svg`<g fill="none" stroke="#111" stroke-width="1"><path d="M2 36Q10 33 14 34Q8 36 4 36"/><path d="M14 35C30 33 60 32 82 34"/><path d="M78 33L81 35L77 36"/><path d="M22 3C26 0 27 6 25 16C23 28 22 40 21 52"/><path d="M22 10C23 18 24 24 25 26C27 26 27 20 28 20C29 20 29 25 31 25C33 25 33 18 35 18C36 20 36 25 38 24C40 22 39 17 42 17C44 18 41 24 44 24C46 22 47 19 49 18C49 22 49 24 51 23"/></g>`)}
                    </div>
                    <div class="c6">
                      <div class="ad"><span>Address:-</span><span class="dots d1">.............................................</span></div>
                      <div class="dots d2">...........................................................</div>
                    </div>
                    <i class="hd a"></i><i class="hd b"></i><i class="hd c"></i><i class="hd d"></i>
                  </div>
                </div>
                <div class="list">
                  <div class="lr hd0"><div>Label</div><div></div></div>
                  ${labels.map((n) => html`<div class="lr ${n === 1 ? "sel" : n % 2 === 0 ? "alt" : ""}"><div>Label ${n}</div><div>${pencil}</div></div>`)}
                </div>
              </div>
              <div class="bot">
                <span class="xl">Load Excel File :</span>
                <div class="inp">C:\\Users\\IBALL\\Documen</div>
                <div class="xb a">${V(22, 22, 25, 24, svg`<rect x=".5" y=".5" width="24" height="23" rx="2" fill="#dff0d4" stroke="#7cb860"/><rect x="3" y="4" width="11" height="16" fill="#fff" stroke="#3f9d3a"/><text x="8.5" y="15" font-size="9" font-weight="700" fill="#2c8a44" text-anchor="middle" font-family="Liberation Sans">x</text><path d="M16 6H22M16 11H22M16 16H22" stroke="#3f8c3a" stroke-width="2.4"/>`)}<span>Browse Excel File</span></div>
                <div class="xb b">${V(22, 22, 26, 24, svg`<path d="M8 1H19L23 5V14H8Z" fill="#fff" stroke="#9aa"/><rect x="1" y="4" width="12" height="12" fill="#dff0d4" stroke="#3f9d3a"/><text x="7" y="14" font-size="10" font-weight="700" fill="#2c8a44" text-anchor="middle" font-family="Liberation Sans">X</text><circle cx="15" cy="15" r="5" fill="#dcecf8" stroke="#4a78a8" stroke-width="1.4"/><path d="M19 19L24 23" stroke="#2c5a8e" stroke-width="2"/>`)}<span>View Excel Data</span></div>
              </div>
            </div>
            <div class="panel">
              <div class="ph">
                <div class="bk">${I(18, 12, svg`<path d="M0 6L7 0V3.5H18V8.5H7V12Z" fill="#1f76a8"/>`)}</div>
                <div class="pt">Symbol Properties</div>
                <div class="do">${V(15, 15, 17, 17, redX)}<span>Delete Object</span></div>
              </div>
              <div class="gbx cr">
                <span class="lg">Create New Symbol</span>
                <div class="sc"><span>Select Category :</span><div class="cb bold"><span>Building</span>${this.chev()}</div></div>
                <div class="gal">
                  <div class="galv"><div class="gg">
                    ${tiles.map((t, i) => i === 10
                      ? html`<div class="tile s">${t}</div>`
                      : html`<div class="tile">${I(73, 53, t)}</div>`)}
                  </div></div>
                  <div class="scr">
                    <div class="ar">${I(9, 6, svg`<path d="M1 5L4.5 1L8 5" fill="none" stroke="#333"/>`)}</div>
                    <div class="thumb"></div>
                    <div class="ar">${this.chev("#333")}</div>
                  </div>
                </div>
              </div>
              <div class="gbx sel-g">
                <span class="lg">Selected Symbol Properties</span>
                <div class="lc">
                  <div class="gbx fill">
                    <span class="lg">Fill Options</span>
                    <div class="solid"><i class="radio on"></i><span>Solid Color</span><span>Select Color :</span><i class="sw k"></i></div>
                    <div class="fcols">
                      <div class="fl">
                        <div class="rl m2"><i class="radio"></i><span>Gradient</span></div>
                        <div class="ln d mn2">Color 1:</div>
                        <div class="ln d m8">Fill Mode :</div>
                        <div class="rl mn1"><i class="radio"></i><span>Fill Style</span></div>
                        <div class="btnsel">Select</div>
                        <div class="ln d m7">Pen Color :</div>
                      </div>
                      <div class="fr">
                        <div class="r1"><i class="sw"></i><span class="lb2">Color 2:</span><i class="sw"></i></div>
                        <div class="cb off m5"><span>ForwardDiagonal</span>${this.chev("#aaa")}</div>
                        <div class="cb off m16"><span></span>${this.chev("#aaa")}</div>
                        <div class="r4"><i class="sw"></i><span class="lb2">Back Color :</span><i class="sw"></i></div>
                      </div>
                    </div>
                  </div>
                  <div class="gbx frame">
                    <span class="lg">Frame</span>
                    <div class="fr1"><i class="chk"></i><span>Show Frame</span><span class="dl">Style :</span>
                      <div class="cbf">${I(100, 3, svg`<rect y="0" width="100" height="2" fill="#000"/>`)}${this.chev("#aaa")}</div></div>
                    <div class="fr2"><span></span><span>Color :</span><i class="sw k"></i><span class="dl">Width :</span>${this.spin("0", "")}</div>
                  </div>
                </div>
                <div class="rc">
                  <div class="gbx shadow">
                    <span class="lg">Shadow</span>
                    <div class="sh1"><i class="chk"></i><span class="tx">Show Shadow</span><span class="dl">Color :</span><i class="sw k"></i></div>
                    <div class="sh2"><span>XOffset :</span>${this.spin("0", "")}<span></span><span>YOffset :</span>${this.spin("0", "")}</div>
                  </div>
                  <div class="gbx outline">
                    <span class="lg">Outline</span>
                    <div class="ol1"><i class="chk"></i><span>Show Outline</span></div>
                    <div class="ol2"><span>Color :</span><i class="sw k"></i><span></span><span>Width :</span>${this.spin("2", "")}</div>
                    <div class="ol3"><i class="chk off"></i><span>Use Shadow Outline</span></div>
                  </div>
                  <div class="gbx rot">
                    <span class="lg">Rotation and Transparency</span>
                    <div class="ro1"><span class="up">Angle :</span><span class="sl"><i style="left:51px"></i></span><span></span>${this.spin("0", "", true)}</div>
                    <div class="ro2"><span class="tl">Transparency :</span><span class="slw"><span class="sl"><i style="left:101px"></i></span></span><span class="spw">${this.spin("100", "", true)}</span></div>
                  </div>
                </div>
              </div>
            </div>
          </div>
        </div>
      </div>
      <div class="strip"></div>
      <div class="badge">Generate-barcode.com</div>
    </div>`;
  }
}
